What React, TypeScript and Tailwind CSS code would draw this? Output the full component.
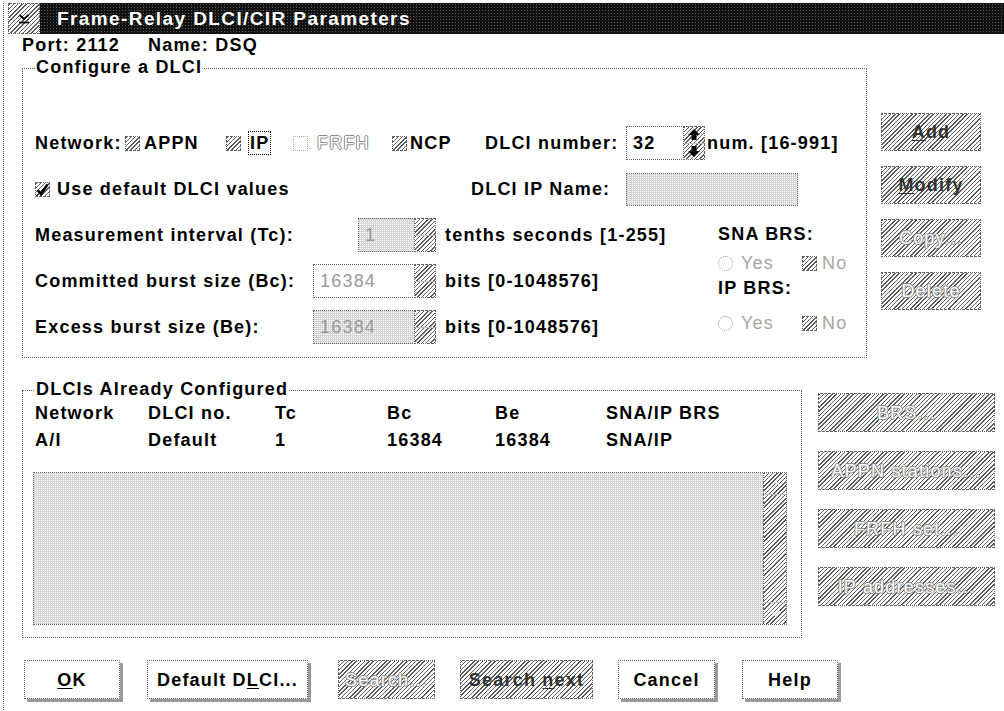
import React from "react";

// halftone fills used across the dialog
const hatch = "bg-[repeating-linear-gradient(135deg,#5c5c5c_0_1px,#ffffff_1px_3px)]";
const dots = "bg-white bg-[linear-gradient(90deg,#d6d6d6_1px,transparent_1px),linear-gradient(#d6d6d6_1px,transparent_1px)] bg-[length:2px_2px]";
const dotted = "border border-dotted border-[#666]";
const ghost = "text-white font-normal [text-shadow:1px_0_#8a8a8a,-1px_0_#8a8a8a,0_1px_#8a8a8a,0_-1px_#8a8a8a]";

const UpArrow = () => (
  <svg width="12" height="11" viewBox="0 0 12 11">
    <path d="M6 0 L12 6 H8.5 V11 H3.5 V6 H0 Z" fill="#000" />
  </svg>
);

const DownArrow = () => (
  <svg width="12" height="11" viewBox="0 0 12 11">
    <path d="M6 11 L12 5 H8.5 V0 H3.5 V5 H0 Z" fill="#000" />
  </svg>
);

function CheckBox({ kind }: { kind: "hatch" | "empty" | "check" }) {
  if (kind === "empty") {
    return <span className="inline-block w-[15px] h-[15px] shrink-0 border border-dotted border-[#aaa] bg-white" />;
  }
  return (
    <span className={`inline-flex items-center justify-center w-[15px] h-[15px] shrink-0 ${dotted} ${hatch}`}>
      {kind === "check" && (
        <svg width="13" height="13" viewBox="0 0 13 13">
          <path d="M1.5 7 L5 11 L11.5 1.5" stroke="#000" strokeWidth="2.6" fill="none" />
        </svg>
      )}
    </span>
  );
}

function Radio() {
  return <span className="inline-block w-[15px] h-[15px] shrink-0 rounded-full border border-dotted border-[#999] bg-white" />;
}

function Spin({ width, value, fill, disabled }: { width: number; value: string; fill: "white" | "dots"; disabled?: boolean }) {
  return (
    <div className="flex h-[34px]">
      <div
        className={`flex items-center pl-[6px] h-full ${dotted} ${fill === "dots" ? dots : "bg-white"} ${disabled ? "text-[#9a9a9a] font-normal" : "text-black"}`}
        style={{ width }}
      >
        {value}
      </div>
      <div className={`w-[21px] h-full flex flex-col border-y border-r border-dotted border-[#666] ${hatch}`}>
        <div className="flex-1 flex items-center justify-center border-b border-[#bbb]">{!disabled && <UpArrow />}</div>
        <div className="flex-1 flex items-center justify-center">{!disabled && <DownArrow />}</div>
      </div>
    </div>
  );
}

function HatchButton({ children, tone, className }: { children: React.ReactNode; tone: "dark" | "light"; className: string }) {
  return (
    <div className={`flex items-center justify-center ${dotted} ${hatch} ${tone === "dark" ? "text-[#333]" : ghost} ${className}`}>
      <span>{children}</span>
    </div>
  );
}

function PushButton({ children, className }: { children: React.ReactNode; className: string }) {
  return (
    <div className={`flex items-center justify-center h-[39px] bg-white ${dotted} shadow-[3px_3px_0_#9a9a9a] ${className}`}>
      <span>{children}</span>
    </div>
  );
}

const configured = [
  ["Network", "DLCI no.", "Tc", "Bc", "Be", "SNA/IP BRS"],
  ["A/I", "Default", "1", "16384", "16384", "SNA/IP"],
];

export default function App() {
  return (
    <div className="w-[1004px] h-[711px] bg-white overflow-hidden font-['Liberation_Sans',Arial,sans-serif] font-bold text-[18px] tracking-[1.2px] text-black leading-none">
      {/* title bar */}
      <div className="flex h-[31px] mt-[3px]">
        <div className="w-[5px] border-l border-dotted border-[#666] ml-[3px]" />
        <div className={`w-[32px] flex items-center justify-center ${dotted} ${hatch}`}>
          <svg width="12" height="10" viewBox="0 0 12 10">
            <path d="M1.5 1 L6 5 L10.5 1" stroke="#000" strokeWidth="1.8" fill="none" />
            <path d="M1 8.5 H11" stroke="#000" strokeWidth="1.8" />
          </svg>
        </div>
        <div className="flex-1 flex items-center pl-[17px] bg-[#121212] bg-[radial-gradient(circle,#5a5a5a_0.5px,transparent_0.8px)] bg-[length:3px_3px] text-white text-[19px] tracking-[1.4px]">
          Frame-Relay DLCI/CIR Parameters
        </div>
      </div>

      <div className="ml-[3px] h-[677px] border-l border-dotted border-[#666] pl-[18px]">
        {/* port and name */}
        <div className="flex items-center h-[20px] mt-[1px]">
          <span className="w-[126px]">Port: 2112</span>
          <span>Name: DSQ</span>
        </div>

        {/* configure section */}
        <div className="flex mt-[3px]">
          <fieldset className="w-[845px] h-[300px] border border-dotted border-[#666] px-[12px] pt-[48px]">
            <legend className="h-[20px] px-[1px]">Configure a DLCI</legend>
            <div className="flex flex-col gap-[12px]">
              <div className="flex items-center h-[34px]">
                <span className="w-[90px]">Network:</span>
                <span className="w-[101px] flex items-center gap-[4px]"><CheckBox kind="hatch" />APPN</span>
                <span className="w-[67px] flex items-center gap-[7px]">
                  <CheckBox kind="hatch" />
                  <span className="border border-dotted border-black px-[1px] py-[2px]">IP</span>
                </span>
                <span className={`w-[99px] flex items-center gap-[9px] ${ghost}`}><CheckBox kind="empty" />FRFH</span>
                <span className="w-[93px] flex items-center gap-[3px]"><CheckBox kind="hatch" />NCP</span>
                <span className="w-[141px]">DLCI number:</span>
                <Spin width={58} value="32" fill="white" />
                <span className="ml-[2px]">num. [16-991]</span>
              </div>

              <div className="flex items-center h-[34px]">
                <CheckBox kind="check" />
                <span className="w-[414px] ml-[7px]">Use default DLCI values</span>
                <span className="w-[155px]">DLCI IP Name:</span>
                <div className={`w-[172px] h-[33px] ${dotted} ${dots}`} />
              </div>

              <div className="flex">
                <div className="w-[683px] flex flex-col gap-[12px]">
                  <div className="flex items-center h-[34px]">
                    <span className="w-[323px]">Measurement interval (Tc):</span>
                    <Spin width={57} value="1" fill="dots" disabled />
                    <span className="ml-[9px]">tenths seconds [1-255]</span>
                  </div>
                  <div className="flex items-center h-[34px]">
                    <span className="w-[278px]">Committed burst size (Bc):</span>
                    <Spin width={102} value="16384" fill="white" disabled />
                    <span className="ml-[9px]">bits [0-1048576]</span>
                  </div>
                  <div className="flex items-center h-[34px]">
                    <span className="w-[278px]">Excess burst size (Be):</span>
                    <Spin width={102} value="16384" fill="dots" disabled />
                    <span className="ml-[9px]">bits [0-1048576]</span>
                  </div>
                </div>

                {/* BRS choices */}
                <div className="flex flex-col">
                  <div className="h-[32px] flex items-center">SNA BRS:</div>
                  <div className="h-[26px] flex items-center text-[#a6a6a6] font-normal">
                    <span className="flex items-center gap-[8px] w-[84px]"><Radio />Yes</span>
                    <span className="flex items-center gap-[5px]"><CheckBox kind="hatch" />No</span>
                  </div>
                  <div className="h-[24px] flex items-center">IP BRS:</div>
                  <div className="h-[26px] mt-[10px] flex items-center text-[#a6a6a6] font-normal">
                    <span className="flex items-center gap-[8px] w-[84px]"><Radio />Yes</span>
                    <span className="flex items-center gap-[5px]"><CheckBox kind="hatch" />No</span>
                  </div>
                </div>
              </div>
            </div>
          </fieldset>

          <div className="ml-[14px] pt-[55px] flex flex-col gap-[15px]">
            <HatchButton tone="dark" className="w-[100px] h-[38px]"><u className="underline-offset-2">A</u>dd</HatchButton>
            <HatchButton tone="dark" className="w-[100px] h-[38px]"><u className="underline-offset-2">M</u>odify</HatchButton>
            <HatchButton tone="light" className="w-[100px] h-[38px]">Copy...</HatchButton>
            <HatchButton tone="light" className="w-[100px] h-[38px]">Delete</HatchButton>
          </div>
        </div>

        {/* already configured */}
        <div className="flex mt-[22px]">
          <fieldset className="w-[780px] h-[258px] border border-dotted border-[#666] px-[12px] pt-[1px]">
            <legend className="h-[20px] px-[1px]">DLCIs Already Configured</legend>
            <div className="flex flex-col gap-[3px]">
              {configured.map((row, i) => (
                <div key={i} className="grid grid-cols-[113px_127px_112px_108px_111px_auto] items-center h-[24px]">
                  {row.map((cell, j) => (
                    <span key={j}>{cell}</span>
                  ))}
                </div>
              ))}
            </div>
            <div className={`-ml-[2px] mt-[20px] w-[754px] h-[153px] flex ${dotted} ${dots}`}>
              <div className="flex-1" />
              <div className={`w-[23px] h-full flex flex-col justify-between border-l border-dotted border-[#666] ${hatch}`}>
                <div className="h-[22px] flex items-center justify-center border-b border-[#bbb]">
                  <svg width="11" height="7" viewBox="0 0 11 7">
                    <path d="M1 6 L5.5 1.5 L10 6" stroke="#fff" strokeWidth="1.6" fill="none" />
                  </svg>
                </div>
                <div className="h-[22px] flex items-center justify-center border-t border-[#bbb]">
                  <svg width="11" height="7" viewBox="0 0 11 7">
                    <path d="M1 1 L5.5 5.5 L10 1" stroke="#fff" strokeWidth="1.6" fill="none" />
                  </svg>
                </div>
              </div>
            </div>
          </fieldset>

          <div className="ml-[16px] pt-[13px] flex flex-col gap-[19px]">
            <HatchButton tone="light" className="w-[177px] h-[39px]">BRS...</HatchButton>
            <HatchButton tone="light" className="w-[177px] h-[39px]">APPN stations...</HatchButton>
            <HatchButton tone="light" className="w-[177px] h-[39px]">FRFH set...</HatchButton>
            <HatchButton tone="light" className="w-[177px] h-[39px]">IP addresses...</HatchButton>
          </div>
        </div>

        {/* dialog buttons */}
        <div className="flex ml-[2px] mt-[22px]">
          <PushButton className="w-[96px]"><u className="underline-offset-2">O</u>K</PushButton>
          <PushButton className="w-[161px] ml-[27px]">Default D<u className="underline-offset-2">L</u>CI...</PushButton>
          <HatchButton tone="light" className="w-[97px] h-[39px] ml-[30px]">Search...</HatchButton>
          <HatchButton tone="dark" className="w-[133px] h-[39px] ml-[25px]">Search <u className="underline-offset-2">n</u>ext</HatchButton>
          <PushButton className="w-[97px] ml-[25px]">Cancel</PushButton>
          <PushButton className="w-[96px] ml-[27px]">Help</PushButton>
        </div>
      </div>
    </div>
  );
}
